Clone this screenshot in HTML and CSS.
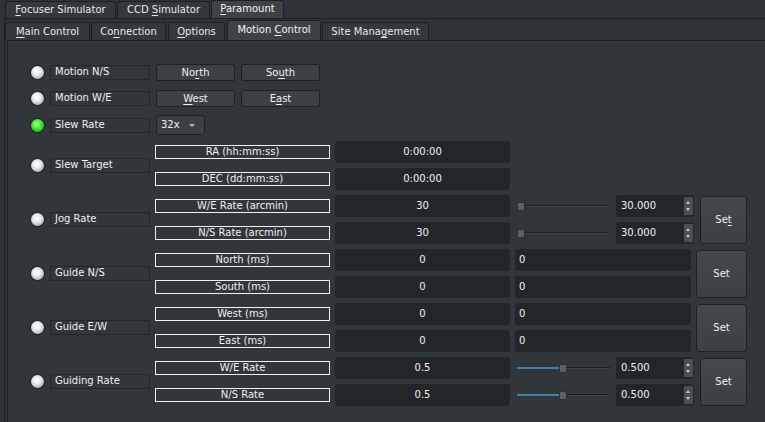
FILE: index.html
```html
<!DOCTYPE html>
<html>
<head>
<meta charset="utf-8">
<link rel="stylesheet" href="styles.css">
</head>
<body>
<div class="tabbar top">
  <div class="tab t-foc"><u>F</u>ocuser Simulator</div>
  <div class="tab t-ccd">CCD <u>S</u>imulator</div>
  <div class="tab sel t-par"><u>P</u>aramount</div>
</div>
<div class="outer">
  <div class="tabbar inner">
    <div class="tab t-main"><u>M</u>ain Control</div>
    <div class="tab t-conn">Co<u>n</u>nection</div>
    <div class="tab t-opt"><u>O</u>ptions</div>
    <div class="tab sel t-mot">Motion <u>C</u>ontrol</div>
    <div class="tab t-site">Site Mana<u>g</u>ement</div>
  </div>
  <div class="pane">
    <div class="rows">
      <div class="row">
        <span class="led"></span>
        <span class="lbl">Motion N/S</span>
        <div class="btns"><span class="btn">No<u>r</u>th</span><span class="btn">So<u>u</u>th</span></div>
      </div>
      <div class="row second">
        <span class="led"></span>
        <span class="lbl">Motion W/E</span>
        <div class="btns"><span class="btn"><u>W</u>est</span><span class="btn">E<u>a</u>st</span></div>
      </div>
      <div class="row third">
        <span class="led on"></span>
        <span class="lbl">Slew Rate</span>
        <div class="combo">32x<span class="arrow"></span></div>
      </div>

      <div class="sec first">
        <span class="led"></span>
        <span class="lbl">Slew Target</span>
        <span class="cap">RA (hh:mm:ss)</span>
        <span class="field c">0:00:00</span>
        <span class="cap r2">DEC (dd:mm:ss)</span>
        <span class="field c r2">0:00:00</span>
      </div>

      <div class="sec">
        <span class="led"></span>
        <span class="lbl">Jog Rate</span>
        <span class="cap">W/E Rate (arcmin)</span>
        <span class="field c">30</span>
        <div class="slider"><span class="track"></span><span class="knob"></span></div>
        <div class="spin">30.000<span class="spinbtn"><i class="up"></i><i class="dn"></i></span></div>
        <span class="setbtn">Se<u>t</u></span>
        <span class="cap r2">N/S Rate (arcmin)</span>
        <span class="field c r2">30</span>
        <div class="slider r2"><span class="track"></span><span class="knob"></span></div>
        <div class="spin r2">30.000<span class="spinbtn"><i class="up"></i><i class="dn"></i></span></div>
      </div>

      <div class="sec guide">
        <span class="led"></span>
        <span class="lbl">Guide N/S</span>
        <span class="cap">North (ms)</span>
        <span class="field c">0</span>
        <span class="field wide">0</span>
        <span class="setbtn">Set</span>
        <span class="cap r2">South (ms)</span>
        <span class="field c r2">0</span>
        <span class="field wide r2">0</span>
      </div>

      <div class="sec guide">
        <span class="led"></span>
        <span class="lbl">Guide E/W</span>
        <span class="cap">West (ms)</span>
        <span class="field c">0</span>
        <span class="field wide">0</span>
        <span class="setbtn">Set</span>
        <span class="cap r2">East (ms)</span>
        <span class="field c r2">0</span>
        <span class="field wide r2">0</span>
      </div>

      <div class="sec">
        <span class="led"></span>
        <span class="lbl">Guiding Rate</span>
        <span class="cap">W/E Rate</span>
        <span class="field c">0.5</span>
        <div class="slider half"><span class="track"></span><span class="fill"></span><span class="knob"></span></div>
        <div class="spin">0.500<span class="spinbtn"><i class="up"></i><i class="dn"></i></span></div>
        <span class="setbtn">Set</span>
        <span class="cap r2">N/S Rate</span>
        <span class="field c r2">0.5</span>
        <div class="slider half r2"><span class="track"></span><span class="fill"></span><span class="knob"></span></div>
        <div class="spin r2">0.500<span class="spinbtn"><i class="up"></i><i class="dn"></i></span></div>
      </div>
    </div>
  </div>
</div>
</body>
</html>
```

FILE: styles.css
```css
* { box-sizing: border-box; }
html, body { margin: 0; padding: 0; }
body {
  width: 765px;
  height: 422px;
  overflow: hidden;
  background: #2f3337;
  color: #eff0f1;
  font-family: "DejaVu Sans", sans-serif;
  font-size: 10px;
}
u { text-decoration: underline; text-underline-offset: 2px; }

.tabbar { display: flex; align-items: flex-end; }
.tabbar.top { padding-left: 5px; height: 18px; }
.tab {
  height: 17px;
  padding: 0;
  text-align: center;
  line-height: 15px;
  border: 1px solid #1d2023;
  border-bottom: none;
  border-radius: 3px 3px 0 0;
  background: #33383d;
  white-space: nowrap;
  color: #e6e7e8;
}
.tab.sel { height: 18px; background: #3d4247; color: #f2f3f4; }
.t-foc { width: 111px; }
.t-ccd { width: 93px; margin-left: 1px; }
.t-par { width: 73px; margin-left: 1px; }
.t-main { width: 85px; }
.t-conn { width: 75px; margin-left: 1px; }
.t-opt { width: 57px; margin-left: 2px; }
.t-mot { width: 94px; margin-left: 2px; }
.t-site { width: 107px; margin-left: 1px; }

.outer {
  margin-left: 4px;
  border-left: 1px solid #1d2023;
  border-top: 1px solid #1d2023;
  height: 404px;
  padding-top: 2px;
}
.tabbar.inner { height: 19px; padding-left: 0; }
.tabbar.inner .tab { height: 18px; line-height: 17px; }
.tabbar.inner .tab.sel { height: 20px; line-height: 18px; }

.pane {
  margin-left: 2px;
  border-left: 1px solid #1d2023;
  border-top: 1px solid #1d2023;
  background: #31363b;
  height: 400px;
  padding: 23px 0 0 23px;
}

.rows { display: flex; flex-direction: column; }
.row, .sec {
  display: grid;
  grid-template-columns: 14px 100px 175px 175px 96px 78px 48px;
  column-gap: 5px;
  align-items: center;
}
.row { height: 17px; }
.row.second { margin-top: 9px; }
.row.third { margin-top: 8px; height: 20px; }
.sec { grid-template-rows: 22px 22px; row-gap: 5px; margin-top: 5px; }
.sec.first { margin-top: 6px; }

.led {
  width: 13px; height: 13px;
  border-radius: 50%;
  background: radial-gradient(circle at 45% 40%, #ffffff 0%, #ececec 35%, #adadad 78%, #7a7a7a 100%);
  box-shadow: 0 0 1px 1px rgba(0,0,0,0.35);
  grid-column: 1;
}
.led.on {
  background: radial-gradient(circle at 45% 40%, #c8ffb0 0%, #4cf03a 35%, #1cb81c 80%, #0d7a10 100%);
}
.lbl {
  grid-column: 2;
  height: 15px;
  border: 1px solid #23272a;
  padding-left: 4px;
  line-height: 12px;
  white-space: nowrap;
}
.sec .led, .sec .lbl { grid-row: 1 / 3; align-self: center; }
.sec .lbl { margin-top: -1px; }

.btns { grid-column: 3; display: flex; gap: 6px; padding-left: 1px; }
.btn {
  width: 79px; height: 17px;
  border: 1px solid #1e2124;
  border-radius: 2px;
  background: #3b4045;
  text-align: center;
  line-height: 15px;
}
.combo {
  grid-column: 3;
  margin-left: 1px;
  width: 49px; height: 20px;
  border: 1px solid #1e2124;
  border-radius: 3px;
  background: #3b4045;
  padding-left: 4px;
  line-height: 18px;
  position: relative;
}
.arrow {
  position: absolute;
  right: 9px; top: 8px;
  border-left: 3px solid transparent;
  border-right: 3px solid transparent;
  border-top: 3px solid #b8babc;
}

.cap {
  grid-column: 3; grid-row: 1;
  height: 14px;
  border: 1px solid #eff0f1;
  text-align: center;
  line-height: 11px;
  white-space: nowrap;
}
.field {
  grid-column: 4; grid-row: 1;
  height: 22px;
  background: #232629;
  border-radius: 3px;
  line-height: 22px;
  padding: 0 4px;
}
.field.c { text-align: center; }
.field.wide { grid-column: 5 / 7; margin-right: 3px; }

.slider { grid-column: 5; grid-row: 1; position: relative; height: 22px; }
.slider .track {
  position: absolute; left: 3px; right: 1px; top: 10px;
  height: 2px; background: #1d2023;
  border-bottom: 1px solid #3d4247;
}
.slider .fill {
  position: absolute; left: 2px; width: 44px; top: 10px;
  height: 2px; background: #3f7fa6;
}
.slider .knob {
  position: absolute; left: 2px; top: 7px;
  width: 8px; height: 9px;
  border-radius: 2px;
  background: #5c6166;
  border: 1px solid #2b2f33;
}
.slider.half .knob { left: 44px; }

.spin {
  grid-column: 6; grid-row: 1;
  height: 22px;
  background: #232629;
  border-radius: 3px;
  padding-left: 5px;
  line-height: 22px;
  position: relative;
}
.spinbtn {
  position: absolute; right: 1px; top: 2px;
  width: 9px; height: 18px;
  background: #4a4f54;
  border-radius: 1px;
}
.spinbtn i {
  position: absolute; left: 2px;
  border-left: 2.5px solid transparent;
  border-right: 2.5px solid transparent;
}
.spinbtn .up { top: 4px; border-bottom: 3px solid #c8cacc; }
.spinbtn .dn { top: 11px; border-top: 3px solid #c8cacc; }

.setbtn {
  grid-column: 7; grid-row: 1 / 3;
  align-self: center;
  height: 48px;
  border: 1px solid #1e2124;
  border-radius: 3px;
  background: linear-gradient(#43484d, #3b4045);
  text-align: center;
  line-height: 46px;
  margin-left: 1px;
}
.guide .setbtn { margin-left: -3px; height: 48px; }

.sec > .r2 { grid-row: 2; }
```
